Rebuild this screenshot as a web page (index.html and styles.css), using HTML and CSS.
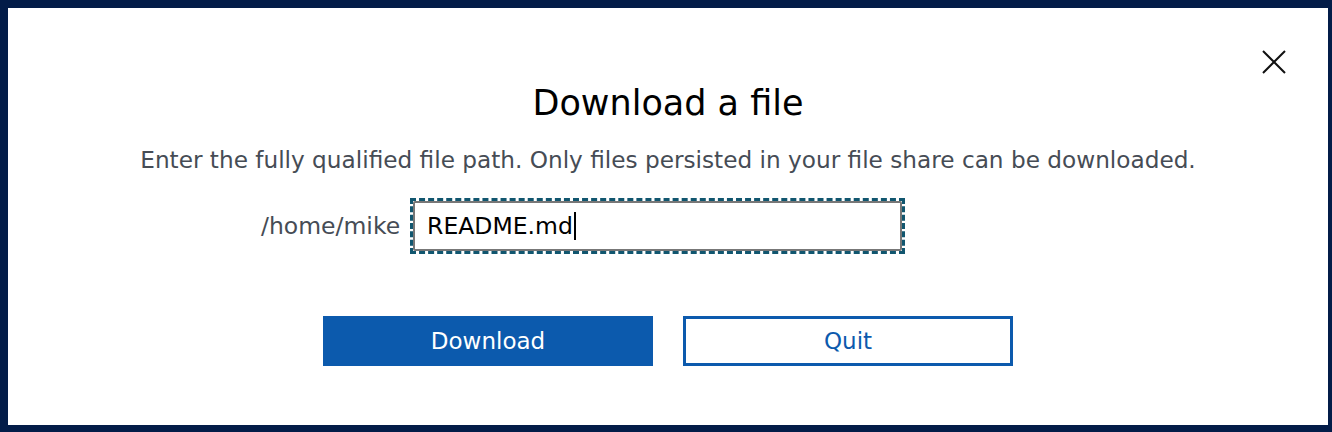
FILE: index.html
```html
<!DOCTYPE html>
<html>
<head>
<meta charset="utf-8">
<link rel="stylesheet" href="styles.css">
</head>
<body>
<div class="dialog">
  <button class="close" aria-label="Close">
    <svg width="24" height="24" viewBox="0 0 24 24"><path d="M1 1L23 23M23 1L1 23" stroke="#111" stroke-width="2" fill="none"/></svg>
  </button>
  <h1 class="title">Download a file</h1>
  <p class="desc">Enter the fully qualified file path. Only files persisted in your file share can be downloaded.</p>
  <div class="row">
    <span class="prefix">/home/mike</span>
    <div class="focus"><div class="field">README.md<span class="caret"></span></div></div>
  </div>
  <div class="actions">
    <button class="btn primary">Download</button>
    <button class="btn secondary">Quit</button>
  </div>
</div>
</body>
</html>
```
FILE: styles.css
```css
html, body { margin: 0; padding: 0; }
body {
  background: #031c48;
  width: 1332px;
  height: 432px;
  padding: 8px 4px 7px 8px;
  box-sizing: border-box;
  font-family: "DejaVu Sans", "Noto Sans", sans-serif;
}
.dialog {
  position: relative;
  background: #fff;
  height: 100%;
  display: flex;
  flex-direction: column;
  align-items: center;
}
.close {
  position: absolute;
  right: 42px;
  top: 42px;
  border: 0;
  background: none;
  padding: 0;
  width: 24px;
  height: 24px;
}
.title {
  margin: 74px 0 0;
  font-weight: 400;
  font-size: 35px;
  line-height: 42px;
  color: #000;
}
.desc {
  margin: 22px 0 0;
  font-size: 23.2px;
  line-height: 28px;
  color: #464c55;
}
.row {
  align-self: flex-start;
  margin-left: 253px;
  margin-top: 24px;
  display: flex;
  align-items: center;
  gap: 10px;
}
.prefix {
  font-size: 23.5px;
  color: #464c55;
}
.focus {
  border: 3px dashed #11566f;
}
.field {
  width: 489px;
  height: 50px;
  border: 2px solid #777;
  border-radius: 2px;
  box-sizing: border-box;
  padding: 0 12px;
  display: flex;
  align-items: center;
  font-size: 23.5px;
  color: #000;
}
.caret {
  display: inline-block;
  width: 2px;
  height: 28px;
  background: #000;
  margin-left: 1px;
}
.actions {
  margin-top: 62px;
  display: flex;
  gap: 30px;
}
.btn {
  width: 330px;
  height: 50px;
  font-family: inherit;
  font-size: 23px;
  box-sizing: border-box;
  padding: 0;
}
.primary {
  background: #0c5aad;
  color: #fff;
  border: 0;
}
.secondary {
  background: #fff;
  color: #0c5aad;
  border: 3px solid #0c5aad;
}
```
